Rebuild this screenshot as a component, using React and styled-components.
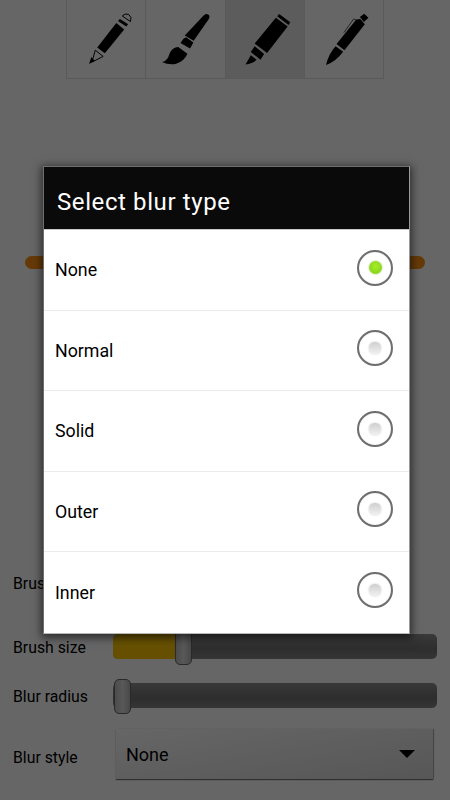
import React from 'react';
import styled, { createGlobalStyle } from 'styled-components';

const GlobalStyle = createGlobalStyle`
  html, body { margin: 0; padding: 0; background: #fff; }
  * { box-sizing: border-box; }
`;

const Screen = styled.div`
  position: relative;
  width: 450px;
  height: 800px;
  overflow: hidden;
  display: flex;
  flex-direction: column;
  background: #fff;
  font-family: Roboto, 'Noto Sans', sans-serif;
  color: #000;
`;

const Toolbar = styled.div`
  display: flex;
  align-self: center;
  width: 318px;
  height: 79px;
  border-bottom: 1px solid #e2e2e2;
  border-left: 1px solid #e2e2e2;
`;

const ToolCell = styled.div`
  width: 79.25px;
  height: 78px;
  border-right: 1px solid #e2e2e2;
  background: ${p => (p.$active ? '#e6e6e6' : 'transparent')};
  svg { display: block; width: 100%; height: 100%; }
`;

const Canvas = styled.div`
  flex: 1;
  display: flex;
  flex-direction: column;
  padding: 177px 25px 0;
`;

const Stroke = styled.div`
  height: 13px;
  border-radius: 7px;
  background: #ff9215;
`;

const Controls = styled.div`
  display: flex;
  flex-direction: column;
  padding: 0 13px 21px;
`;

const Row = styled.div`
  display: flex;
  align-items: center;
  height: ${p => p.$h}px;
  margin-top: ${p => p.$mt || 0}px;
`;

const Label = styled.div`
  width: 100px;
  padding-top: ${p => p.$pt || 0}px;
  font-size: 15.8px;
  line-height: 20px;
  white-space: nowrap;
`;

const Track = styled.div`
  position: relative;
  width: 324px;
  height: 25px;
  border-radius: 5px;
  background: linear-gradient(#8f8f8f, #727272 60%, #868686);
`;

const Fill = styled.div`
  height: 100%;
  border-radius: 5px 0 0 5px;
  background: #ffc800;
`;

const Thumb = styled.div`
  position: absolute;
  top: -4px;
  width: 17px;
  height: 35px;
  margin-left: -8px;
  border: 1px solid #6a6a6a;
  border-radius: 5px;
  background: linear-gradient(90deg, #bdbdbd, #dcdcdc 50%, #b5b5b5);
`;

const Select = styled.div`
  display: flex;
  align-items: center;
  justify-content: space-between;
  width: 317px;
  height: 50px;
  margin-left: 3px;
  padding: 0 18px 0 10px;
  font-size: 18px;
  background: linear-gradient(170deg, #ffffff, #d9d9d9);
  box-shadow: 0 1px 1px #777, 1px 0 1px #bbb;
`;

const Caret = styled.span`
  width: 0;
  height: 0;
  border-left: 8px solid transparent;
  border-right: 8px solid transparent;
  border-top: 8px solid #000;
`;

const Scrim = styled.div`
  position: absolute;
  inset: 0;
  background: rgba(0, 0, 0, 0.6);
`;

const Dialog = styled.div`
  position: absolute;
  left: 43px;
  top: 166px;
  width: 367px;
  height: 468px;
  background: #fff;
  border: 1px solid #6f6f6f;
  border-bottom-color: #b8b8b8;
  border-right-color: #9a9a9a;
  box-shadow: 0 2px 8px 2px rgba(0, 0, 0, 0.55);
`;

const DialogTitle = styled.div`
  height: 63px;
  padding: 7px 13px 0;
  display: flex;
  align-items: center;
  background: #0a0a0a;
  border-bottom: 1px solid #c8c8c8;
  color: #fff;
  font-size: 24px;
  letter-spacing: 0.6px;
`;

const Option = styled.div`
  display: flex;
  align-items: center;
  justify-content: space-between;
  height: 80.5px;
  padding: 0 16px 0 11px;
  border-bottom: ${p => (p.$last ? 'none' : '1px solid #ececec')};
  font-size: 17.8px;
`;

const Radio = styled.span`
  position: relative;
  top: -2px;
  display: flex;
  align-items: center;
  justify-content: center;
  width: 36px;
  height: 36px;
  border-radius: 50%;
  border: 2px solid #6e6e6e;
  box-shadow: inset 0 0 1px #bbb;
`;

const Dot = styled.span`
  width: ${p => (p.$on ? 13 : 12)}px;
  height: ${p => (p.$on ? 13 : 12)}px;
  border-radius: ${p => (p.$on ? '50%' : '45%')};
  background: ${p =>
    p.$on
      ? 'radial-gradient(circle at 50% 40%, #a6ec2a, #7fcc14)'
      : 'linear-gradient(#cfcfcf, #f0f0f0)'};
  box-shadow: 0 0 2px ${p => (p.$on ? '#9bbd6a' : '#c4c4c4')};
`;

// icon coordinates follow a 3x grid of the toolbar strip
const PencilIcon = () => (
  <svg viewBox="48 0 238 234">
    <path d="M140 143 L198 68 L222 88 L163 160 Z" fill="#000" />
    <path d="M203 62 L209 56 L234 72 L228 79 Z" fill="#000" />
    <path d="M216 47 Q224 38 235 42 Q247 50 241 64 Z" fill="none" stroke="#000" strokeWidth="3" />
    <path d="M134 151 L158 170 L124 187 Z" fill="none" stroke="#000" strokeWidth="3" />
    <path d="M115 193 L122 172 L132 184 Z" fill="#000" />
  </svg>
);

const BrushIcon = () => (
  <svg viewBox="286 0 238 234">
    <path d="M462 45 Q472 36 479 46 Q480 52 476 58 L431 122 L404 106 Z" fill="#000" />
    <path d="M400 116 L408 112 L430 128 L420 146 L391 129 Z" fill="#000" />
    <path d="M384 141 L412 162 Q402 186 376 193 Q352 196 335 187 Q352 184 358 160 Q366 142 384 141 Z" fill="#000" />
  </svg>
);

const MarkerIcon = () => (
  <svg viewBox="524 0 240 234">
    <path d="M687 40 L721 66 L716 74 L681 47 Z" fill="#000" />
    <path d="M677 52 L713 79 L650 160 L612 131 Z" fill="#000" />
    <path d="M612 139 L641 163 L630 181 L600 157 Z" fill="#000" />
    <path d="M600 167 L618 181 Q606 192 584 195 Z" fill="#000" />
  </svg>
);

const PenIcon = () => (
  <svg viewBox="764 0 238 234">
    <path d="M931 50 L944 40 L957 52 L943 65 Z" fill="#000" />
    <path d="M920 58 L932 56 L946 72 L884 151 L860 132 Z" fill="#000" />
    <path d="M882 98 L912 56 L919 59" fill="none" stroke="#000" strokeWidth="2" />
    <path d="M857 139 L880 156 Q858 186 828 196 Q836 162 857 139 Z" fill="#000" />
  </svg>
);

const OPTIONS = ['None', 'Normal', 'Solid', 'Outer', 'Inner'];

export default function App() {
  return (
    <>
      <GlobalStyle />
      <Screen>
        <Toolbar>
          <ToolCell><PencilIcon /></ToolCell>
          <ToolCell><BrushIcon /></ToolCell>
          <ToolCell $active><MarkerIcon /></ToolCell>
          <ToolCell><PenIcon /></ToolCell>
        </Toolbar>
        <Canvas>
          <Stroke />
        </Canvas>
        <Controls>
          <Row $h={20}>
            <Label>Brush</Label>
          </Row>
          <Row $h={25} $mt={40}>
            <Label $pt={2}>Brush size</Label>
            <Track>
              <Fill style={{ width: 70 }} />
              <Thumb style={{ left: 70 }} />
            </Track>
          </Row>
          <Row $h={25} $mt={24}>
            <Label $pt={2}>Blur radius</Label>
            <Track>
              <Thumb style={{ left: 9 }} />
            </Track>
          </Row>
          <Row $h={50} $mt={21}>
            <Label $pt={8}>Blur style</Label>
            <Select>
              None
              <Caret />
            </Select>
          </Row>
        </Controls>
        <Scrim />
        <Dialog>
          <DialogTitle>Select blur type</DialogTitle>
          {OPTIONS.map((name, i) => (
            <Option key={name} $last={i === OPTIONS.length - 1}>
              <span>{name}</span>
              <Radio><Dot $on={i === 0} /></Radio>
            </Option>
          ))}
        </Dialog>
      </Screen>
    </>
  );
}
